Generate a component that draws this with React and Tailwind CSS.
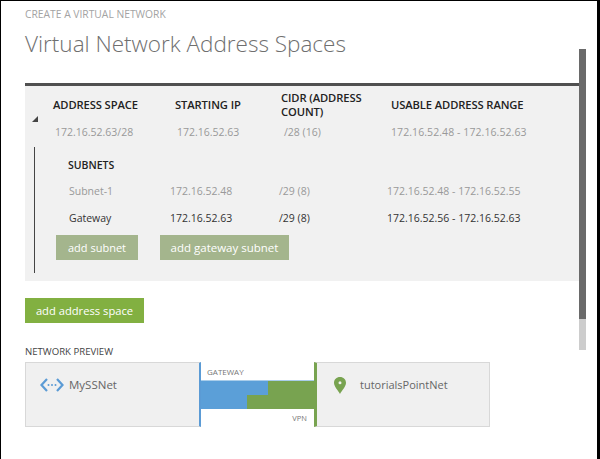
const font = { fontFamily: '"Open Sans", "Noto Sans", sans-serif' };

const subnets = [
  { name: 'Subnet-1', ip: '172.16.52.48', cidr: '/29 (8)', range: '172.16.52.48 - 172.16.52.55', color: 'text-[#999999]' },
  { name: 'Gateway', ip: '172.16.52.63', cidr: '/29 (8)', range: '172.16.52.56 - 172.16.52.63', color: 'text-[#333333]' },
];

function AddressPanel() {
  return (
    <section className="h-[198px] bg-[#f1f1f1] border-t-[3px] border-[#505050] flex flex-col">
      {/* header row */}
      <div className="h-[36px] mt-[1px] pl-[28px] grid grid-cols-[122px_106px_110px_1fr] items-center text-[11.2px] leading-[14px] font-semibold text-[#222222] tracking-[-0.1px]">
        <div>ADDRESS SPACE</div>
        <div>STARTING IP</div>
        <div className="w-[106px]">CIDR (ADDRESS COUNT)</div>
        <div>USABLE ADDRESS RANGE</div>
      </div>
      {/* address space row */}
      <div className="flex -mt-[1px] h-[22px] items-center">
        <svg width="6" height="6" viewBox="0 0 6 6" className="ml-[7px] mr-[17px] -mt-[28px]">
          <polygon points="6,0 6,6 0,6" fill="#444444" />
        </svg>
        <div className="grid grid-cols-[122px_107px_107px_1fr] text-[10.5px] text-[#999999] flex-1">
          <div>172.16.52.63/28</div>
          <div>172.16.52.63</div>
          <div>/28 (16)</div>
          <div className="tracking-[0.08px]">172.16.52.48 - 172.16.52.63</div>
        </div>
      </div>
      {/* subnets */}
      <div className="ml-[9px] mt-[3px] h-[126px] border-l border-[#444444] flex flex-col">
        <div className="pl-[33px] mt-[11px] text-[10.5px] leading-[14px] font-semibold text-[#222222]">SUBNETS</div>
        <div className="mt-[6px] flex flex-col">
          {subnets.map((s) => (
            <div key={s.name} className={`h-[27px] pl-[34px] grid grid-cols-[101px_109px_108px_1fr] items-center text-[10.5px] ${s.color}`}>
              <div>{s.name}</div>
              <div>{s.ip}</div>
              <div>{s.cidr}</div>
              <div>{s.range}</div>
            </div>
          ))}
        </div>
        <div className="pl-[21px] mt-[3px] flex gap-[22px]">
          <button className="w-[82px] h-[25px] pt-[1px] bg-[#a4b58d] text-white text-[11px]">add subnet</button>
          <button className="w-[129px] h-[25px] pt-[1px] bg-[#a4b58d] text-white text-[11.5px]">add gateway subnet</button>
        </div>
      </div>
    </section>
  );
}

function NetworkPreview() {
  return (
    <div className="flex h-[65px] w-[465px]">
      <div className="w-[176px] bg-[#f0f0f0] border border-[#d8d8d8] border-r-2 border-r-[#5b9bd5] flex items-start pl-[14px] pt-[14px] gap-[5px]">
        <svg width="24" height="16" viewBox="0 0 24 16" fill="none" stroke="#5b9bd5" strokeWidth="2.2">
          <path d="M7 2 L1.5 8 L7 14" />
          <path d="M17 2 L22.5 8 L17 14" />
          <circle cx="8.5" cy="8" r="1" fill="#5b9bd5" stroke="none" />
          <circle cx="12" cy="8" r="1" fill="#5b9bd5" stroke="none" />
          <circle cx="15.5" cy="8" r="1" fill="#5b9bd5" stroke="none" />
        </svg>
        <span className="text-[11.5px] leading-[16px] text-[#666666]">MySSNet</span>
      </div>
      <div className="w-[113px] flex flex-col">
        <div className="h-[18px] pl-[6px] pt-[2px] flex items-center text-[8px] text-[#777777]">GATEWAY</div>
        <div className="border-t border-[#a9cdea]">
          <div className="flex h-[14px]">
            <div className="w-[67px] bg-[#5b9fd8]" />
            <div className="flex-1 bg-[#78a350]" />
          </div>
          <div className="flex h-[14px]">
            <div className="w-[46px] bg-[#5b9fd8]" />
            <div className="flex-1 bg-[#78a350]" />
          </div>
        </div>
        <div className="flex-1 pr-[7px] pt-[2px] flex items-center justify-end text-[7.5px] text-[#777777]">VPN</div>
      </div>
      <div className="w-[176px] bg-[#f0f0f0] border border-[#d8d8d8] border-l-[3px] border-l-[#78a350] flex items-start pl-[17px] pt-[14px] gap-[14px]">
        <svg width="12" height="17" viewBox="0 0 12 17">
          <path fillRule="evenodd" fill="#78a350" d="M6 0 C9.5 0 12 2.6 12 5.8 C12 9.5 8 13.5 6 17 C4 13.5 0 9.5 0 5.8 C0 2.6 2.5 0 6 0 Z M6 4.2 A1.5 1.5 0 1 0 6 7.2 A1.5 1.5 0 1 0 6 4.2 Z" />
        </svg>
        <span className="text-[11px] leading-[16px] text-[#666666]">tutorialsPointNet</span>
      </div>
    </div>
  );
}

export default function App() {
  return (
    <main style={font} className="w-[600px] h-[459px] bg-white border-t border-l border-r-[3px] border-black overflow-hidden flex">
      <div className="w-[554px] ml-[24px] flex flex-col shrink-0">
        <div className="mt-[6px] h-[14px] leading-[14px] text-[10.3px] text-[#a3a3a3]">CREATE A VIRTUAL NETWORK</div>
        <h1 className="mt-[5px] h-[36px] leading-[36px] text-[22.5px] font-light text-[#6f6f6f]">Virtual Network Address Spaces</h1>
        <div className="mt-[21px]"><AddressPanel /></div>
        <button className="mt-[17px] w-[119px] h-[25px] pt-[1px] bg-[#82b041] text-white text-[11.2px]">add address space</button>
        <div className="mt-[22px] h-[14px] leading-[14px] text-[9.6px] text-[#444444]">NETWORK PREVIEW</div>
        <div className="mt-[3px]"><NetworkPreview /></div>
      </div>
      <div className="w-[7px] mt-[48px] flex flex-col">
        <div className="h-[270px] bg-[#6a6a6a]" />
        <div className="h-[31px] bg-[#cdcdcd]" />
      </div>
    </main>
  );
}
